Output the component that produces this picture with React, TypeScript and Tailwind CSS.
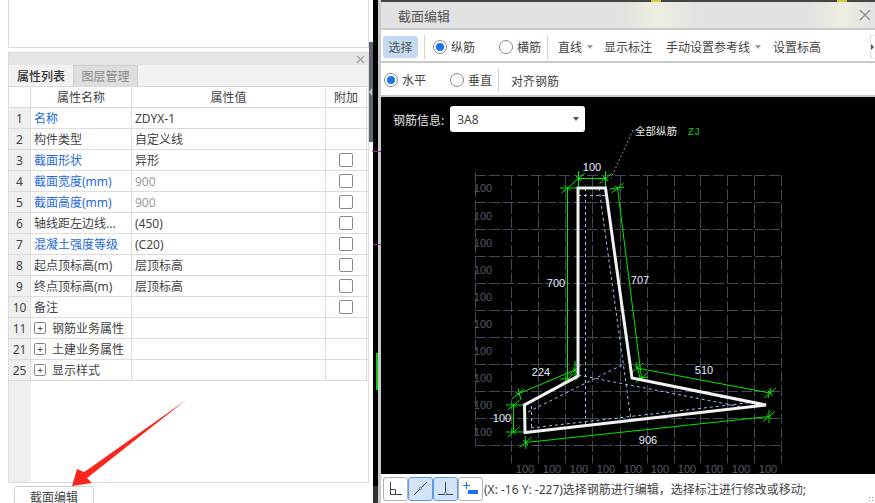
const cjk = "font-['Noto_Sans','Noto_Sans_CJK_SC',sans-serif]";

const rows = [
  { id: 1, name: '名称', value: 'ZDYX-1', blue: true },
  { id: 2, name: '构件类型', value: '自定义线' },
  { id: 3, name: '截面形状', value: '异形', blue: true, check: true },
  { id: 4, name: '截面宽度(mm)', value: '900', blue: true, check: true, dim: true },
  { id: 5, name: '截面高度(mm)', value: '900', blue: true, check: true, dim: true },
  { id: 6, name: '轴线距左边线...', value: '(450)', check: true },
  { id: 7, name: '混凝土强度等级', value: '(C20)', blue: true, check: true },
  { id: 8, name: '起点顶标高(m)', value: '层顶标高', check: true },
  { id: 9, name: '终点顶标高(m)', value: '层顶标高', check: true },
  { id: 10, name: '备注', value: '', check: true },
  { id: 11, name: '钢筋业务属性', value: '', group: true },
  { id: 21, name: '土建业务属性', value: '', group: true },
  { id: 25, name: '显示样式', value: '', group: true },
];

const Radio = ({ on }: { on?: boolean }) => (
  <span className="flex h-[14px] w-[14px] shrink-0 items-center justify-center rounded-full border border-[#8a8a8a] bg-white">
    {on && <span className="h-2 w-2 rounded-full bg-[#1a73e8]" />}
  </span>
);

const Caret = () => <span className="h-0 w-0 border-x-[3px] border-t-[4px] border-x-transparent border-t-[#999]" />;

const Separator = () => <span className="h-[24px] w-px bg-[#d4d4d4]" />;

const PropertyPanel = () => (
  <div className="flex h-[503px] w-[369px] shrink-0 flex-col bg-white pl-2">
    <div className="h-[48px] shrink-0 border border-t-0 border-[#dcdcdc] bg-white" />
    <div className="mt-[4px] flex h-[431px] shrink-0 flex-col border border-[#dcdcdc]">
      <div className="flex h-[12px] shrink-0 items-center justify-end bg-[#e5e5e5] pr-[3px]">
        <svg width="9" height="9" viewBox="0 0 9 9" stroke="#a0a0a0" strokeWidth="1.1">
          <path d="M1 1l7 7M8 1l-7 7" />
        </svg>
      </div>
      <div className="flex h-[22px] shrink-0 border-b border-[#d8d8d8] bg-[#f2f2f2] text-[12px]">
        <div className="flex w-[64px] items-center justify-center pt-[2px] font-medium text-[#333]">属性列表</div>
        <div className="flex w-[65px] items-center justify-center border border-b-0 border-[#cfcfcf] bg-[#dedede] pt-[2px] text-[#888]">图层管理</div>
      </div>
      <div className="flex min-h-0 flex-1 flex-col bg-[linear-gradient(to_right,#efefef_22px,#ffffff_22px)]">
        <div className="grid h-[21px] shrink-0 grid-cols-[22px_101px_194px_41px] border-b border-[#dcdcdc] bg-white text-[12px] text-[#444]">
          <div className="border-r border-[#dcdcdc]" />
          <div className="flex items-center justify-center border-r border-[#dcdcdc] pt-[2px]">属性名称</div>
          <div className="flex items-center justify-center border-r border-[#dcdcdc] pt-[2px]">属性值</div>
          <div className="flex items-center justify-center border-r border-[#dcdcdc] pt-[2px]">附加</div>
        </div>
        {rows.map((r) => (
          <div key={r.id} className="grid h-[21px] shrink-0 grid-cols-[22px_101px_194px_41px] border-b border-[#dcdcdc] bg-white text-[12px] text-[#444]">
            <div className="flex items-center justify-center border-r border-[#dcdcdc] bg-[#efefef] pt-[2px]">{r.id}</div>
            <div className={`flex items-center gap-[6px] whitespace-nowrap border-r border-[#dcdcdc] pl-[3px] ${r.blue ? 'text-[#2468e0]' : ''}`}>
              {r.group && (
                <span className="flex h-[12px] w-[12px] items-center justify-center rounded-[2px] border border-[#888] text-[10px] leading-none">+</span>
              )}
              <span className="pt-[2px]">{r.name}</span>
            </div>
            <div className={`flex items-center border-r border-[#dcdcdc] pl-[3px] pt-[2px] ${r.dim ? 'text-[#999]' : ''}`}>{r.value}</div>
            <div className="flex items-center justify-center border-r border-[#dcdcdc]">
              {r.check && <span className="h-[14px] w-[14px] rounded-[2px] border border-[#8a8a8a] bg-white" />}
            </div>
          </div>
        ))}
      </div>
    </div>
    <div className="ml-[6px] mt-[3px] flex h-[24px] w-[80px] shrink-0 justify-center rounded-t-[3px] border border-[#cfcfcf] pt-[2px] text-[12px] text-[#444]">截面编辑</div>
  </div>
);

const Divider = () => (
  <div className="relative flex h-[503px] w-[12px] shrink-0">
    <div className="flex w-[4px] flex-col bg-white">
      <div className="mt-[42px] flex h-[100px] items-center bg-[#5d6670]">
        <span className="h-0 w-0 border-y-[4px] border-r-[3px] border-y-transparent border-r-[#c9ced3]" />
      </div>
    </div>
    <div className="flex w-[5px] flex-col justify-end bg-black">
      <div className="h-[17px] bg-[#333]" />
    </div>
    <div className="w-[3px] bg-[#c8cacc]" />
    <span className="absolute left-[3px] top-[151px] h-px w-[9px] bg-[#a020a0]" />
    <span className="absolute left-[4px] top-[244px] h-px w-[8px] bg-[#a020a0]" />
    <span className="absolute left-[7px] top-[353px] h-[37px] w-[2px] bg-[#10c810]" />
  </div>
);

const gridY = [175, 202, 229, 256, 283, 310, 337, 364, 391, 418, 445];
const gridX = [511, 538, 565, 592, 620, 647, 674, 700, 727, 754, 781];
const axisY = [188, 216, 243, 270, 297, 324, 351, 378, 405, 432];
const bottomX = [525, 552, 579, 606, 633, 660, 687, 714, 741, 768];

const greenLines = [
  [578.5, 171, 578.5, 188], [605.5, 171, 605.5, 188], [578.5, 178.5, 605.5, 178.5],
  [567.5, 188, 567.5, 379], [560, 188, 578, 188], [560, 379, 578, 379],
  [617.5, 188, 641.5, 378], [610, 189, 624, 187], [634, 379, 648, 377],
  [518, 394, 575, 370], [575, 361, 575, 378], [518, 388, 521, 400],
  [637, 368, 770, 393], [636, 362, 640, 378], [771, 388, 768, 398],
  [525.5, 442.5, 769, 416.5], [525, 436, 526, 449], [769, 410, 769, 423],
  [513.5, 405, 513.5, 432], [506, 405, 524, 405], [506, 432, 524, 432],
];
const greenTicks = [
  [578.5, 178.5], [605.5, 178.5], [567.5, 188], [567.5, 379], [617.5, 188], [641.5, 378],
  [518, 394], [575, 370], [637, 368], [770, 393], [525.5, 442.5], [769, 416.5], [513.5, 405], [513.5, 432],
];
const blueLines = [
  [585.5, 188, 585.5, 427], [578, 195.5, 607, 195.5], [599, 188, 631, 420],
  [531.5, 406, 531.5, 428], [531, 428, 755, 402], [528, 412, 622, 365],
  [578, 375, 742, 407], [632, 378, 745, 402],
];
const labels = [
  ['100', 592, 167], ['700', 556, 283], ['707', 640, 280], ['224', 541, 372],
  ['510', 704, 370], ['906', 648, 440], ['100', 502, 418],
];

const SectionDrawing = () => (
  <svg className="absolute inset-0" width="494" height="377" viewBox="381 97 494 377">
    <g stroke="#40485a" strokeWidth="1" strokeDasharray="11 3">
      {gridY.map((y) => <line key={y} x1="475" y1={y + 0.5} x2="781" y2={y + 0.5} />)}
      {gridX.map((x) => <line key={x} x1={x + 0.5} y1="175" x2={x + 0.5} y2="463" />)}
      <line x1="475.5" y1="172" x2="475.5" y2="446" />
    </g>
    <g fill="#555b68" fontSize="11" fontFamily="'Liberation Sans', sans-serif" textAnchor="middle">
      {axisY.map((y) => <text key={y} x="483" y={y + 4}>100</text>)}
      {bottomX.map((x) => <text key={x} x={x} y="473">100</text>)}
    </g>
    <polyline points="633,130 611,178" fill="none" stroke="#909090" strokeDasharray="2 2" />
    <g stroke="#9cc0ee" strokeWidth="1" strokeDasharray="3 3">
      {blueLines.map((l, i) => <line key={i} x1={l[0]} y1={l[1]} x2={l[2]} y2={l[3]} />)}
    </g>
    <g stroke="#00e800" strokeWidth="1">
      {greenLines.map((l, i) => <line key={i} x1={l[0]} y1={l[1]} x2={l[2]} y2={l[3]} />)}
      {greenTicks.map((t, i) => <line key={i} x1={t[0] - 6} y1={t[1] + 5} x2={t[0] + 6} y2={t[1] - 5} />)}
      {greenTicks.map((t, i) => <line key={i} x1={t[0] - 2.5} y1={t[1] - 2.5} x2={t[0] + 2.5} y2={t[1] + 2.5} />)}
    </g>
    <polygon
      points="578,188 605.5,188 632,378 766,405 525,432.5 524.5,405 578,376"
      fill="none"
      stroke="#f2f2f2"
      strokeWidth="3"
    />
    <g fill="#e6eeff" fontSize="11" fontFamily="'Liberation Sans', sans-serif" textAnchor="middle">
      {labels.map(([t, x, y], i) => <text key={i} x={x} y={Number(y) + 4}>{t}</text>)}
    </g>
    <text x="635" y="135" fill="#e8e8e8" fontSize="10.5" fontFamily="'Noto Sans CJK SC', sans-serif">全部纵筋</text>
    <text x="688" y="135" fill="#00d800" fontSize="10" fontFamily="'Liberation Mono', monospace">ZJ</text>
  </svg>
);

const EditorPanel = () => (
  <div className="flex h-[503px] min-w-0 flex-1 flex-col bg-[#c8cacc] text-[12px] text-[#444]">
    <div className="h-[2px] shrink-0 bg-[linear-gradient(to_right,#444_270px,#d8c840_270px,#d8c840_280px,#444_280px,#444_456px,#d8c840_456px,#d8c840_466px,#444_466px)]" />
    <div className="flex h-[26px] shrink-0 items-center justify-between bg-[linear-gradient(to_right,#e2e2e2_240px,#eeeee0_275px,#e2e2e2_320px,#e2e2e2_430px,#eeeee0_460px,#e2e2e2_494px)] pl-[17px] pr-[4px]">
      <span className="pt-[3px] text-[13px] text-[#555]">截面编辑</span>
      <svg width="12" height="12" viewBox="0 0 12 12" stroke="#8a8a8a" strokeWidth="1.2">
        <path d="M1 1l10 10M11 1L1 11" />
      </svg>
    </div>
    <div className="mt-[2px] flex h-[31px] shrink-0 items-center bg-white pl-[2px] pt-[2px]">
      <span className="flex h-[22px] w-[35px] items-center justify-center rounded-[3px] bg-[#c3daf2] pt-[2px] text-[#555]">选择</span>
      <span className="ml-[6px] flex"><Separator /></span>
      <span className="ml-[8px] flex"><Radio on /></span>
      <span className="ml-[4px] pt-[2px]">纵筋</span>
      <span className="ml-[24px] flex"><Radio /></span>
      <span className="ml-[4px] pt-[2px]">横筋</span>
      <span className="ml-[6px] flex"><Separator /></span>
      <span className="ml-[10px] pt-[2px]">直线</span>
      <span className="ml-[5px] flex"><Caret /></span>
      <span className="ml-[11px] pt-[2px]">显示标注</span>
      <span className="ml-[14px] pt-[2px]">手动设置参考线</span>
      <span className="ml-[5px] flex"><Caret /></span>
      <span className="ml-[12px] pt-[2px]">设置标高</span>
      <span className="ml-auto mr-[1px] flex h-[24px] w-[4px] items-center rounded-l-[3px] border border-r-0 border-[#ddd]">
        <span className="h-0 w-0 border-y-[3px] border-l-[3px] border-y-transparent border-l-[#555]" />
      </span>
    </div>
    <div className="mt-[2px] flex h-[32px] shrink-0 items-center bg-white pl-[3px] pt-[2px]">
      <Radio on />
      <span className="ml-[4px] pt-[2px]">水平</span>
      <span className="ml-[24px] flex"><Radio /></span>
      <span className="ml-[4px] pt-[2px]">垂直</span>
      <span className="ml-[6px] flex"><Separator /></span>
      <span className="ml-[12px] pt-[4px]">对齐钢筋</span>
    </div>
    <div className="relative mt-[2px] h-[377px] shrink-0 overflow-hidden bg-black">
      <SectionDrawing />
      <div className="absolute left-[12px] top-[9px] flex h-[26px] items-center gap-[6px]">
        <span className="pt-[3px] text-[#e4e4e4]">钢筋信息:</span>
        <div className="flex h-[26px] w-[135px] items-center justify-between rounded-[3px] bg-white pl-[7px] pr-[6px] text-[#444]">
          <span className="pt-[2px]">3A8</span>
          <span className="h-0 w-0 border-x-[3px] border-t-[4px] border-x-transparent border-t-[#555]" />
        </div>
      </div>
    </div>
    <div className="relative flex min-h-0 flex-1 items-center bg-white pl-[2px]">
      <div className="flex">
        <span className="flex h-[24px] w-[25px] items-center justify-center rounded-[3px] border border-[#b0b0b0] bg-white">
          <svg width="15" height="15" viewBox="0 0 15 15" fill="none" stroke="#444"><path d="M2.5 1v12.5H14M2.5 8.5h5v5" /></svg>
        </span>
        <span className="flex h-[24px] w-[25px] items-center justify-center rounded-[3px] border border-[#5a9be8] bg-[#d3e3f8]">
          <svg width="15" height="15" viewBox="0 0 15 15" fill="none" stroke="#444"><path d="M1 14L14 1" /><circle cx="7.5" cy="7.5" r="1.2" fill="#d3e3f8" stroke="#4a80c0" /></svg>
        </span>
        <span className="flex h-[24px] w-[25px] items-center justify-center rounded-[3px] border border-[#5a9be8] bg-[#d3e3f8]">
          <svg width="15" height="15" viewBox="0 0 15 15" fill="none" stroke="#444"><path d="M7.5 1v12M0 13.5h15" /><circle cx="7.5" cy="12.5" r="1.2" fill="#d3e3f8" stroke="#4a80c0" /></svg>
        </span>
        <span className="flex h-[24px] w-[25px] items-center justify-center rounded-[3px] border border-[#b0b0b0] bg-white">
          <svg width="17" height="15" viewBox="0 0 17 15" fill="none"><path d="M4.500 1v7M1 4.500h7" stroke="#1a73e8" /><rect x="6" y="9" width="10" height="4" fill="#1a73e8" /></svg>
        </span>
      </div>
      <span className="ml-[1px] whitespace-nowrap pt-[3px] text-[12px]">(X: -16 Y: -227)选择钢筋进行编辑，选择标注进行修改或移动;</span>
      <span className="absolute bottom-[1px] right-[1px] h-[6px] w-[6px] bg-[radial-gradient(#888_1px,transparent_1px)] bg-[length:3px_3px]" />
    </div>
  </div>
);

export default function App() {
  return (
    <div className={`relative flex h-[503px] w-[875px] overflow-hidden bg-white ${cjk}`}>
      <PropertyPanel />
      <Divider />
      <EditorPanel />
      <svg className="absolute left-0 top-0" width="200" height="503" viewBox="0 0 200 503">
        <polygon points="186,400 90,468 84,472 77,469 72,486 92,483 87,478" fill="#f8261c" />
      </svg>
    </div>
  );
}
